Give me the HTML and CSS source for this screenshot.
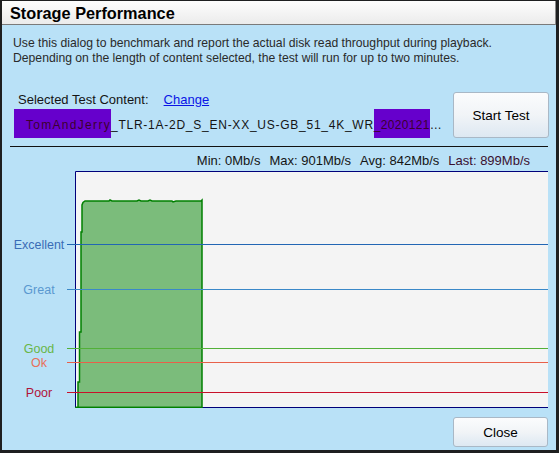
FILE: index.html
```html
<!DOCTYPE html>
<html>
<head>
<meta charset="utf-8">
<link rel="stylesheet" href="styles.css">
</head>
<body>
<div class="window">
  <div class="titlebar">Storage Performance</div>
  <div class="content">
    <div class="desc">
      <div>Use this dialog to benchmark and report the actual disk read throughput during playback.</div>
      <div>Depending on the length of content selected, the test will run for up to two minutes.</div>
    </div>
    <div class="toprow">
      <div class="selected">
        <div class="sel-label">Selected Test Content:<a class="link" href="#">Change</a></div>
        <div class="filename"><span class="redact first">TomAndJerry</span>_TLR-1A-2D_S_EN-XX_US-GB_51_4K_WR<span class="redact second">_2020121</span>…</div>
      </div>
      <button class="btn start">Start Test</button>
    </div>
    <div class="sep"></div>
    <div class="stats">
      <span>Min: 0Mb/s</span>
      <span>Max: 901Mb/s</span>
      <span>Avg: 842Mb/s</span>
      <span class="last">Last: 899Mb/s</span>
    </div>
    <div class="chart">
      <svg class="chart-svg" width="546" height="237" viewBox="0 0 546 237">
        <g transform="translate(-2,-171)">
          <rect x="75" y="171" width="473" height="237" fill="#f4f4f4"/>
          <path d="M548 171.5 H75.5 V407.5 H548" fill="none" stroke="#00007a" stroke-width="1"/>
          <polygon class="bar" points="75.5,407.5 78,407.5 78,382 79.5,382 79.5,332 81,332 81,232 82,232 82,205 83,202.5 85,201 109,201 110,200 112,201 137,201 139,200 141,201 148,201 150,200 152,201 172,201 173,202 176,201 201,201 202,200 202,407.5"/>
          <line x1="75.5" y1="407.5" x2="202" y2="407.5" stroke="#008000" stroke-width="1.5"/>
          <line class="l-exc" x1="67" y1="244.5" x2="548" y2="244.5"/>
          <line class="l-great" x1="67" y1="289.5" x2="548" y2="289.5"/>
          <line class="l-good" x1="67" y1="348.5" x2="548" y2="348.5"/>
          <line class="l-ok" x1="67" y1="362.5" x2="548" y2="362.5"/>
          <line class="l-poor" x1="67" y1="392.5" x2="548" y2="392.5"/>
          <text class="lbl t-exc" x="39" y="244.5">Excellent</text>
          <text class="lbl t-great" x="39" y="290">Great</text>
          <text class="lbl t-good" x="39" y="349">Good</text>
          <text class="lbl t-ok" x="39" y="363">Ok</text>
          <text class="lbl t-poor" x="39" y="392.5">Poor</text>
        </g>
      </svg>
    </div>
    <div class="bottomrow">
      <button class="btn close">Close</button>
    </div>
  </div>
</div>
</body>
</html>
```

FILE: styles.css
```css
html, body {
  margin: 0;
  padding: 0;
}
body {
  background: #1e1f20;
  width: 559px;
  height: 453px;
  overflow: hidden;
  font-family: "Liberation Sans", Arial, sans-serif;
  font-size: 12px;
  color: #141414;
}
.window {
  margin: 1px 3px 3px 2px;
  width: 554px;
  height: 449px;
  display: flex;
  flex-direction: column;
}
.titlebar {
  height: 23px;
  line-height: 24px;
  border-bottom: 1px solid #7a7a7a;
  border-right: 1px solid #8a8a8a;
  background: linear-gradient(#fdfdfd, #ebebeb);
  font-size: 16.3px;
  font-weight: bold;
  color: #000;
  padding-left: 8px;
}
.content {
  flex: 1;
  background: #b9e1f7;
  padding: 0 8px;
  display: flex;
  flex-direction: column;
}
.desc {
  padding-top: 11px;
  padding-left: 3px;
  line-height: 15px;
  font-size: 12.2px;
  color: #2a2a2a;
}
.toprow {
  margin-top: 26px;
  height: 46px;
  display: flex;
  justify-content: space-between;
}
.selected {
  display: flex;
  flex-direction: column;
}
.sel-label {
  padding-left: 8px;
  line-height: 15px;
  font-size: 13px;
}
.link {
  margin-left: 15px;
  color: #0a14e6;
  text-decoration: underline;
}
.filename {
  margin-top: 11px;
  padding-left: 4px;
  line-height: 15px;
  white-space: nowrap;
  letter-spacing: 0.75px;
}
.redact {
  background: #6600cc;
  color: #3c0030;
  padding-top: 9px;
  padding-bottom: 6px;
}
.redact.first {
  padding-left: 12px;
  letter-spacing: 1.3px;
}
.redact.second {
  letter-spacing: 0.3px;
}
.btn {
  font-family: "Liberation Sans", Arial, sans-serif;
  font-size: 13.5px;
  color: #000;
  background: linear-gradient(#fbfcfd, #f1f4f7 50%, #dde8f2);
  border: 1px solid #a9b8c6;
  border-radius: 3px;
  padding: 0;
  margin: 0;
}
.btn.start {
  width: 96px;
  height: 46px;
  margin-right: -1px;
}
.sep {
  margin-top: 8px;
  height: 1px;
  background: #111;
}
.stats {
  margin-top: 6px;
  line-height: 15px;
  font-size: 13px;
  display: flex;
  justify-content: flex-end;
  gap: 9px;
  padding-right: 18px;
}
.stats .last {
  color: #3a1030;
}
.chart {
  margin-top: 3px;
  margin-left: -8px;
  height: 237px;
}
.chart-svg {
  display: block;
}
.bar {
  fill: #7bbc7b;
  stroke: #008000;
  stroke-width: 1.5;
}
.l-exc { stroke: #2266b4; stroke-width: 1; }
.l-great { stroke: #3a88c8; stroke-width: 1; }
.l-good { stroke: #52b038; stroke-width: 1; }
.l-ok { stroke: #e8604a; stroke-width: 1; }
.l-poor { stroke: #c8102a; stroke-width: 1; }
.lbl {
  font-family: "Liberation Sans", Arial, sans-serif;
  font-size: 12.5px;
  text-anchor: middle;
  dominant-baseline: central;
}
.t-exc { fill: #3a6cb6; }
.t-great { fill: #5a98d0; }
.t-good { fill: #68b648; }
.t-ok { fill: #e8705a; }
.t-poor { fill: #b0143a; }
.bottomrow {
  margin-top: 9px;
  display: flex;
  justify-content: flex-end;
}
.btn.close {
  width: 95px;
  height: 30px;
}
```
